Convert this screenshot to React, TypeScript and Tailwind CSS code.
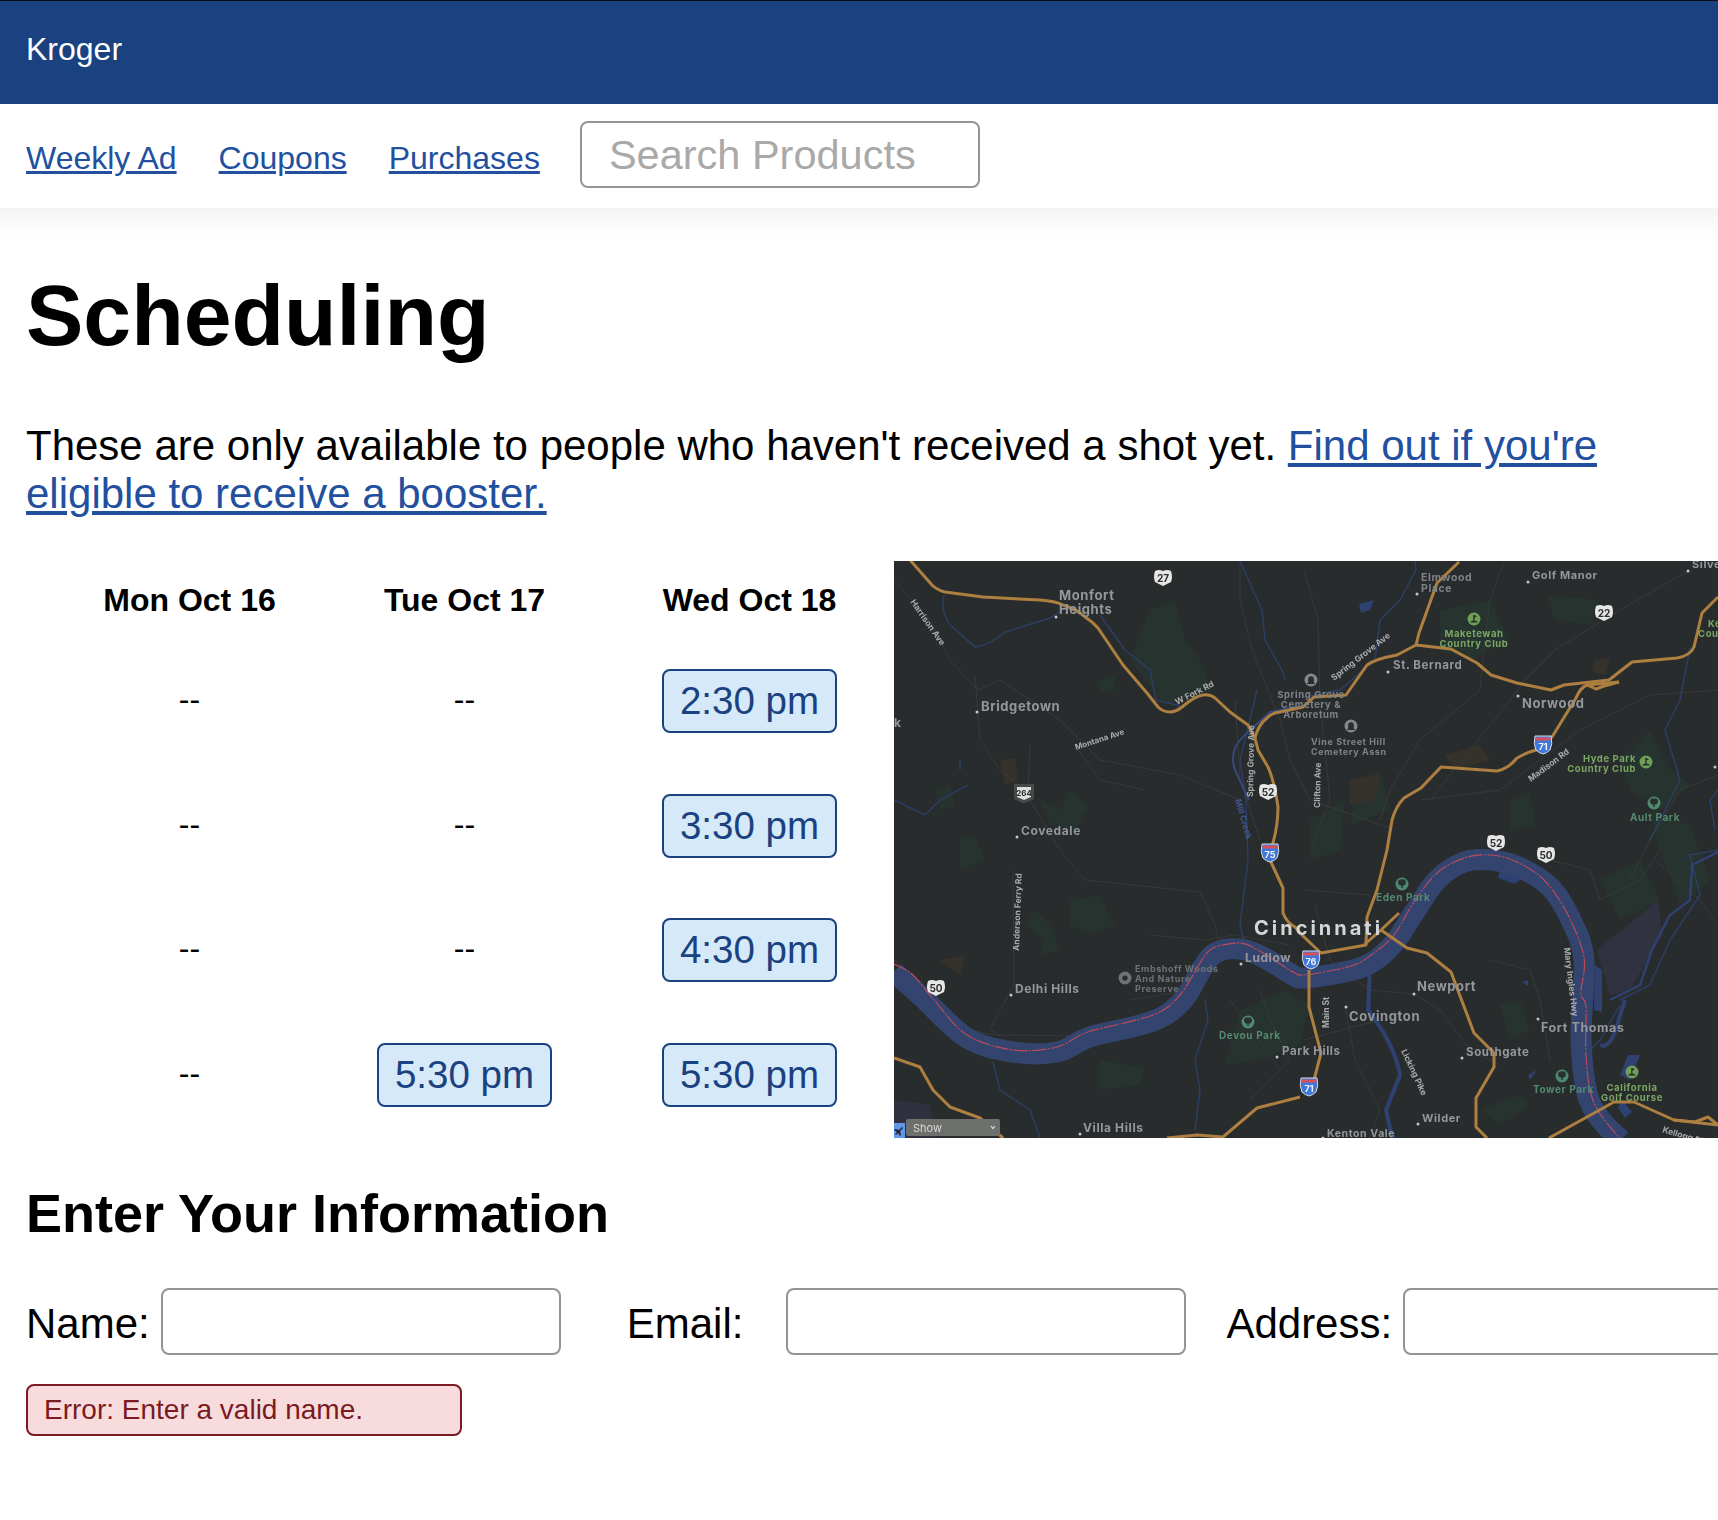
const FONT = "font-['Liberation_Sans',Arial,sans-serif]";

const slots: (string | null)[][] = [
  [null, null, null, null],
  [null, null, null, "5:30 pm"],
  ["2:30 pm", "3:30 pm", "4:30 pm", "5:30 pm"],
];
const days = [
  { name: "Mon Oct 16", ml: "ml-[76px]" },
  { name: "Tue Oct 17", ml: "ml-[100px]" },
  { name: "Wed Oct 18", ml: "ml-[110px]" },
];

// turn a list of points into a smooth path, used for the river
function smooth(pts: number[][]) {
  let d = `M${pts[0][0]} ${pts[0][1]}`;
  for (let i = 0; i < pts.length - 1; i++) {
    const p0 = pts[i - 1] ?? pts[i];
    const p1 = pts[i];
    const p2 = pts[i + 1];
    const p3 = pts[i + 2] ?? p2;
    const c1x = p1[0] + (p2[0] - p0[0]) / 6;
    const c1y = p1[1] + (p2[1] - p0[1]) / 6;
    const c2x = p2[0] - (p3[0] - p1[0]) / 6;
    const c2y = p2[1] - (p3[1] - p1[1]) / 6;
    d += `C${c1x} ${c1y} ${c2x} ${c2y} ${p2[0]} ${p2[1]}`;
  }
  return d;
}

const riverPts = [
  [894, 972], [923, 998], [967, 1038], [1013, 1052], [1057, 1052], [1090, 1037], [1153, 1021], [1183, 1000], [1203, 967], [1217, 952],
  [1240, 949], [1263, 957], [1293, 975], [1304, 978], [1344, 972], [1371, 963], [1394, 943], [1414, 913], [1437, 880], [1464, 862],
  [1491, 860], [1521, 868], [1551, 888], [1571, 920], [1584, 960], [1581, 1037], [1587, 1093], [1601, 1120], [1621, 1140],
];
const borderPts = [
  [894, 964], [913, 975], [934, 1000], [967, 1035], [1013, 1050], [1057, 1047], [1088, 1032], [1153, 1015], [1180, 995], [1200, 963], [1213, 948],
  [1240, 943], [1258, 950], [1293, 972], [1304, 975], [1324, 972], [1354, 965], [1374, 953], [1394, 935], [1414, 902], [1437, 873], [1464, 858],
  [1491, 855], [1517, 862], [1544, 880], [1567, 913], [1584, 957], [1581, 993], [1586, 1007], [1586, 1057], [1594, 1103], [1621, 1140],
];

// map data below is in page coordinates (the svg viewBox starts at the map corner)
const highways = [
  "M910 560L932 585Q937 590 945 592L983 597L1040 600Q1055 601 1063 605Q1078 610 1085 617Q1093 622 1098 628L1123 665L1147 693L1158 707Q1163 712 1170 712Q1176 712 1182 707Q1195 696 1203 695Q1210 694 1215 698L1230 712L1248 725L1255 738L1258 750L1268 767Q1274 780 1278 807Q1278 825 1273 843L1270 860L1283 888L1283 913Q1287 923 1295 927L1304 937L1321 953L1366 945L1367 917L1377 890L1387 850L1392 820Q1396 806 1404 798L1421 788L1441 767L1497 771Q1508 769 1517 758Q1528 752 1536 750L1552 737L1576 698Q1580 688 1587 685L1619 682",
  "M1255 738Q1258 725 1267 718Q1272 713 1280 712L1303 707L1314 697L1346 695L1367 665Q1375 659 1397 655L1416 645L1451 649L1477 663L1491 675L1517 683L1551 690L1564 685L1609 680L1632 662L1677 658Q1690 656 1694 647L1702 613L1718 597",
  "M1416 645L1419 633L1437 583L1459 562",
  "M1381 930L1407 948L1427 953L1451 972L1474 1033L1494 1053L1494 1067L1476 1098L1476 1127L1487 1138",
  "M1399 913L1381 930L1364 945",
  "M1309 970L1309 1007L1321 1053L1314 1080",
  "M1300 1097L1257 1108L1223 1137L1197 1135L1167 1138",
  "M1549 1138L1614 1102L1634 1102L1674 1120L1718 1125",
  "M1674 1120L1695 1122L1708 1117L1718 1125",
  "M894 1058L920 1067L933 1090L950 1107L980 1118L1003 1138",
  "M1587 685L1596 689L1604 686L1619 682",
];
const minorRoads = [
  "M894 580L930 620L950 660L978 690L1000 680L1060 720L1100 760L1180 775L1240 800",
  "M975 676L980 740L1000 770L1024 790L1060 850L1085 880L1200 892L1215 925L1218 940",
  "M1030 745L1028 790M1077 748L1100 780L1145 790",
  "M1013 870L1014 985L1000 1010L990 1030L1000 1035L1100 1036L1150 1015L1180 1005",
  "M894 960L930 990L970 1030L1000 1036M1130 1000L1190 990",
  "M1240 561L1240 600L1252 650L1280 720L1290 760L1310 800L1395 830",
  "M1304 570L1318 620L1320 700L1330 800L1310 850M1235 700L1240 780L1260 840",
  "M1504 561L1490 600L1485 640L1480 690L1420 740L1390 790L1380 820",
  "M1688 571L1620 610L1555 650L1525 680L1510 700L1430 800",
  "M1718 690L1650 695L1580 730L1500 790L1420 800M1718 775L1680 790L1650 840L1630 880",
  "M1304 890L1370 895M1315 905L1330 960L1370 990L1414 994L1440 1010L1470 1050L1500 1065",
  "M1345 1005L1355 1060L1380 1110L1370 1138M1304 1040L1380 1020",
  "M1550 860L1590 870L1600 900L1640 880L1660 850",
  "M1655 860L1700 900L1718 925M1490 960L1530 970L1540 1000L1550 1060",
  "M1250 1100L1290 1060L1270 1020L1260 990M1230 1000L1280 1070",
  "M1150 935L1205 940L1235 935L1290 945",
];
const streams = [
  "M944 595Q940 610 950 625L975 647Q990 645 1005 632L1050 618L1070 605",
  "M1100 615L1125 650L1150 670L1156 700L1180 706",
  "M1240 561L1262 610L1265 640L1282 670L1285 680",
  "M1257 690L1240 760L1246 800L1248 860L1240 925L1245 945",
  "M894 800L925 815L940 800L968 785M960 760L960 770",
  "M1304 697L1340 690L1375 660L1380 620L1400 600L1416 570L1415 561",
  "M1205 1000L1208 1020L1195 1060L1200 1090L1195 1130",
  "M993 1062L1000 1090L1030 1110L1040 1138",
  "M1369 965L1370 1010L1395 1055L1400 1080L1385 1110L1395 1138",
  "M1620 1000L1650 985L1670 940L1700 895L1690 855L1718 850",
  "M1580 1060L1600 1040L1620 1005",
  "M1690 648L1680 700L1665 730L1680 780L1650 840",
  "M1718 790L1710 800L1715 830",
];
const parks = [
  "M1150 610L1175 600L1185 640L1200 660L1212 690L1165 705L1130 660Z",
  "M1100 680L1115 675L1115 690L1100 692Z",
  "M960 840L975 835L985 860L960 870ZM935 790L950 785L955 805L940 810Z",
  "M1040 800L1060 810L1070 790L1090 805L1075 830L1050 825Z",
  "M1025 925L1045 940L1040 955L1060 950L1050 925L1035 910Z",
  "M1070 900L1100 895L1115 925L1090 935L1070 925Z",
  "M1240 1010L1285 990L1310 1005L1300 1045L1260 1060L1225 1065Z",
  "M1440 610L1490 600L1510 640L1470 660L1440 650Z",
  "M1545 595L1600 600L1590 625L1555 620Z",
  "M1620 760L1650 730L1670 770L1690 785L1660 810L1630 790Z",
  "M1510 800L1530 790L1535 825L1510 830Z",
  "M1360 780L1380 770L1390 810L1350 825Z",
  "M1480 1110L1520 1095L1530 1105L1500 1125Z",
  "M1500 1005L1520 1000L1530 1030L1510 1040Z",
  "M1290 1000L1310 1010L1300 1035Z",
  "M1600 880L1640 860L1660 900L1620 920Z",
  "M1650 810L1690 825L1710 880L1680 905L1660 850Z",
  "M1100 1060L1145 1068L1140 1085L1100 1090Z",
  "M1310 820L1345 800L1340 850L1310 860Z",
];
const brownPatches = "M1000 760L1015 758L1018 780L1005 785ZM1445 755L1480 745L1490 760L1455 770ZM1350 780L1380 775L1375 800L1350 805ZM1595 660L1610 658L1605 675L1592 672ZM940 960L965 955L960 975Z";

type Label = { t: string; x: number; y: number; s?: number; c?: string; r?: number; a?: "middle" | "end"; w?: number };
const GREY = "#94979b";
const SOFT = "#7f8388";
const GREEN = "#7aa763";
const TEAL = "#558a70";
const ROAD = "#a9abad";
const labels: Label[] = [
  { t: "Monfort", x: 1059, y: 600 },
  { t: "Heights", x: 1059, y: 614 },
  { t: "Bridgetown", x: 981, y: 710.5, s: 13 },
  { t: "Covedale", x: 1021, y: 835, s: 12 },
  { t: "Delhi Hills", x: 1015, y: 993, s: 12 },
  { t: "Villa Hills", x: 1083, y: 1132, s: 12 },
  { t: "Ludlow", x: 1245, y: 962, s: 12 },
  { t: "Park Hills", x: 1282, y: 1055, s: 11.5 },
  { t: "Newport", x: 1417, y: 991 },
  { t: "Covington", x: 1349, y: 1021 },
  { t: "Southgate", x: 1466, y: 1056, s: 11.5 },
  { t: "Fort Thomas", x: 1541, y: 1032, s: 12.5 },
  { t: "Wilder", x: 1422, y: 1122, s: 11 },
  { t: "Kenton Vale", x: 1327, y: 1137, s: 10.5 },
  { t: "Elmwood", x: 1421, y: 581, s: 10.5, c: SOFT },
  { t: "Place", x: 1421, y: 592, s: 10.5, c: SOFT },
  { t: "Golf Manor", x: 1532, y: 579, s: 11 },
  { t: "Silver", x: 1692, y: 568, s: 11 },
  { t: "St. Bernard", x: 1393, y: 669, s: 11.5 },
  { t: "Norwood", x: 1522, y: 708, s: 13 },
  { t: "k", x: 894, y: 727, s: 12 },
  { t: "Cincinnati", x: 1254, y: 935, s: 20, c: "#d3d5d7", w: 3 },
  { t: "Embshoff Woods", x: 1135, y: 972, s: 9, c: "#6f7275" },
  { t: "And Nature", x: 1135, y: 982, s: 9, c: "#6f7275" },
  { t: "Preserve", x: 1135, y: 992, s: 9, c: "#6f7275" },
  { t: "Vine Street Hill", x: 1311, y: 745, s: 9, c: SOFT },
  { t: "Cemetery Assn", x: 1311, y: 755, s: 9, c: SOFT },
  { t: "Spring Grove", x: 1311, y: 698, s: 9.5, c: SOFT, a: "middle" },
  { t: "Cemetery &", x: 1311, y: 708, s: 9.5, c: SOFT, a: "middle" },
  { t: "Arboretum", x: 1311, y: 718, s: 9.5, c: SOFT, a: "middle" },
  { t: "Maketewah", x: 1474, y: 637, s: 9.5, c: GREEN, a: "middle" },
  { t: "Country Club", x: 1474, y: 647, s: 9.5, c: GREEN, a: "middle" },
  { t: "Hyde Park", x: 1636, y: 762, s: 9.5, c: GREEN, a: "end" },
  { t: "Country Club", x: 1636, y: 772, s: 9.5, c: GREEN, a: "end" },
  { t: "California", x: 1632, y: 1091, s: 9.5, c: GREEN, a: "middle" },
  { t: "Golf Course", x: 1632, y: 1101, s: 9.5, c: GREEN, a: "middle" },
  { t: "Ke", x: 1708, y: 627, s: 9.5, c: GREEN },
  { t: "Cou", x: 1698, y: 637, s: 9.5, c: GREEN },
  { t: "Ault Park", x: 1655, y: 821, s: 10, c: TEAL, a: "middle" },
  { t: "Devou Park", x: 1219, y: 1039, s: 10, c: TEAL },
  { t: "Eden Park", x: 1376, y: 901, s: 10, c: TEAL },
  { t: "Tower Park", x: 1533, y: 1093, s: 10, c: TEAL },
  { t: "Harrison Ave", x: 910, y: 602, s: 8.5, c: ROAD, r: 55, w: 0 },
  { t: "W Fork Rd", x: 1177, y: 705, s: 8.5, c: ROAD, r: -27, w: 0 },
  { t: "Montana Ave", x: 1076, y: 750, s: 8, c: ROAD, r: -18, w: 0 },
  { t: "Spring Grove Ave", x: 1253, y: 797, s: 8.5, c: ROAD, r: -89, w: 0 },
  { t: "Spring Grove Ave", x: 1334, y: 681, s: 8.5, c: ROAD, r: -38, w: 0 },
  { t: "Mill Creek", x: 1235, y: 800, s: 8.5, c: "#41588f", r: 74, w: 0 },
  { t: "Clifton Ave", x: 1320, y: 808, s: 8.5, c: ROAD, r: -89, w: 0 },
  { t: "Madison Rd", x: 1531, y: 782, s: 8.5, c: ROAD, r: -37, w: 0 },
  { t: "Anderson Ferry Rd", x: 1019, y: 951, s: 8.5, c: ROAD, r: -88, w: 0 },
  { t: "Main St", x: 1329, y: 1028, s: 8.5, c: ROAD, r: -90, w: 0 },
  { t: "Licking Pike", x: 1401, y: 1051, s: 8.5, c: ROAD, r: 65, w: 0 },
  { t: "Mary Ingles Hwy", x: 1564, y: 948, s: 8.5, c: ROAD, r: 83, w: 0 },
  { t: "Kellogg Pike", x: 1662, y: 1132, s: 8.5, c: ROAD, r: 17, w: 0 },
];
const dots = [
  [1056, 617], [977, 712], [1017, 837], [1011, 995], [1080, 1134], [1241, 964], [1277, 1057], [1414, 994], [1346, 1007],
  [1462, 1058], [1538, 1019], [1418, 1124], [1323, 1138], [1417, 594], [1528, 582], [1688, 571], [1388, 672], [1518, 696], [1715, 767],
];
const usShields: [string, number, number][] = [["27", 1163, 578], ["52", 1268, 792], ["22", 1604, 613], ["52", 1496, 843], ["50", 1546, 855], ["50", 936, 988]];
const interstates: [string, number, number][] = [["75", 1270, 853], ["71", 1543, 745], ["76", 1311, 960], ["71", 1309, 1087]];
const pois: { x: number; y: number; c: string; kind: "tree" | "golf" | "grave" | "ring" }[] = [
  { x: 1474, y: 619, c: "#6f9f57", kind: "golf" },
  { x: 1646, y: 762, c: "#6f9f57", kind: "golf" },
  { x: 1632, y: 1072, c: "#6f9f57", kind: "golf" },
  { x: 1654, y: 803, c: "#4f8a70", kind: "tree" },
  { x: 1248, y: 1022, c: "#4f8a70", kind: "tree" },
  { x: 1402, y: 884, c: "#4f8a70", kind: "tree" },
  { x: 1562, y: 1076, c: "#4f8a70", kind: "tree" },
  { x: 1311, y: 680, c: "#83868a", kind: "grave" },
  { x: 1351, y: 726, c: "#83868a", kind: "grave" },
  { x: 1125, y: 978, c: "#6f7275", kind: "ring" },
];

function Poi({ x, y, c, kind }: (typeof pois)[number]) {
  return (
    <g transform={`translate(${x} ${y})`}>
      <circle r="6.5" fill={c} />
      {kind === "tree" && <path d="M0 -4.5A3 3 0 0 1 3.5 0A2.5 2.5 0 0 1 .7 1.5V4H-.7V1.5A2.5 2.5 0 0 1 -3.5 0A3 3 0 0 1 0 -4.5Z" fill="#29302e" />}
      {kind === "golf" && <path d="M-.8 -4H.5L3 -2.6L.5 -1.4V1.6L3.5 2.4V3.6H-3.5V2.4L-.8 1.6Z" fill="#29302e" />}
      {kind === "grave" && <path d="M-2.8 3V-1A2.8 2.8 0 0 1 2.8 -1V3Z M-4 3H4V4H-4Z" fill="#2a2c2e" />}
      {kind === "ring" && <circle r="2.6" fill="#2a2c2e" />}
    </g>
  );
}

function UsShield({ n, x, y }: { n: string; x: number; y: number }) {
  return (
    <g transform={`translate(${x} ${y})`}>
      <path d="M-8 -7Q-4 -9 0 -7Q4 -9 8 -7Q10 -1 8 4Q4 6 0 8Q-4 6 -8 4Q-10 -1 -8 -7Z" fill="#e6e6e4" />
      <text y="4" textAnchor="middle" className="font-['Inter',sans-serif] text-[10px] font-bold" fill="#2a2c2e">{n}</text>
    </g>
  );
}

function Interstate({ n, x, y }: { n: string; x: number; y: number }) {
  return (
    <g transform={`translate(${x} ${y})`}>
      <path d="M-8 -9H8Q10 -1 7 5Q4 8 0 9Q-4 8 -7 5Q-10 -1 -8 -9Z" fill="#3f78d8" stroke="#d7dbe2" strokeWidth="1" />
      <rect x="-7.5" y="-7.5" width="15" height="3" fill="#d8505a" />
      <text y="5" textAnchor="middle" className="font-['Inter',sans-serif] text-[9px] font-bold" fill="#f2f4f8">{n}</text>
    </g>
  );
}

function MapPicture() {
  return (
    <svg viewBox="894 561 824 577" className="h-[577px] w-[824px] shrink-0 blur-[0.4px]">
      <rect x="894" y="561" width="824" height="577" fill="#292c2d" />
      {parks.map((d) => (
        <path key={d} d={d} fill="#26332f" />
      ))}
      <path d={brownPatches} fill="#35322c" />
      <path d="M1597 950L1640 915L1658 900L1662 935L1630 990L1610 995Z" fill="#30323f" />
      <path d="M894 1100L930 1105L935 1138L894 1138Z" fill="#30303f" />
      {minorRoads.map((d) => (
        <path key={d} d={d} fill="none" stroke="#37393b" strokeWidth="1" />
      ))}
      {streams.map((d) => (
        <path key={d} d={d} fill="none" stroke="#2d3f66" strokeWidth="1.4" />
      ))}
      <path d="M1249 800L1235 770Q1228 750 1245 735L1270 712L1300 706" fill="none" stroke="#34497c" strokeWidth="2" />
      <path d="M1370 965L1368 1010Q1395 1045 1400 1075L1386 1110L1392 1138" fill="none" stroke="#2f4170" strokeWidth="4" />
      <path d="M1610 1000L1640 985L1652 950L1670 915L1690 900L1692 865L1718 852" fill="none" stroke="#2f4170" strokeWidth="2.5" />
      <path d="M1600 1045Q1612 1050 1620 1015L1625 1000" fill="none" stroke="#2f4170" strokeWidth="4" />
      <path d="M1620 1075L1628 1055L1640 1055L1630 1080ZM1622 1100L1632 1112L1625 1118L1618 1108ZM1595 965L1602 970L1602 1012L1594 1010ZM1520 880L1515 870L1500 868L1498 878L1515 884ZM1359 604L1374 600L1370 610L1361 613ZM1528 1075L1537 1070L1530 1080ZM1522 982L1528 980L1528 986Z" fill="#2f4170" />
      <path d={smooth(riverPts)} fill="none" stroke="#33456f" strokeWidth="21" strokeLinejoin="round" />
      <path d={smooth(borderPts)} fill="none" stroke="#bd4a5a" strokeWidth="1.2" strokeDasharray="14 1.5 2 1.5" />
      {highways.map((d) => (
        <path key={d} d={d} fill="none" stroke="#ad7f41" strokeWidth="3" strokeLinejoin="round" />
      ))}
      {labels.map((l, i) => (
        <text
          key={i}
          x={l.x}
          y={l.y}
          textAnchor={l.a}
          fill={l.c ?? GREY}
          fontSize={l.s ?? 13}
          letterSpacing={l.w ?? 0.6}
          transform={l.r ? `rotate(${l.r} ${l.x} ${l.y})` : undefined}
          className="font-['Inter',sans-serif] font-bold"
        >
          {l.t}
        </text>
      ))}
      {dots.map(([x, y]) => (
        <circle key={`${x}-${y}`} cx={x} cy={y} r="1.5" fill="#c4c6c8" />
      ))}
      {pois.map((p) => (
        <Poi key={`${p.x}-${p.y}`} {...p} />
      ))}
      <g transform="translate(1024 793)">
        <path d="M-10 -9H10V6Q5 9 0 10Q-5 9 -10 6Z" fill="#47494b" />
        <path d="M-7 -6H7V4L0 7L-7 4Z" fill="#dedede" />
        <text y="3" textAnchor="middle" className="font-['Inter',sans-serif] text-[8px] font-bold" fill="#2a2c2e">264</text>
      </g>
      {usShields.map(([n, x, y]) => (
        <UsShield key={`${n}-${x}`} n={n} x={x} y={y} />
      ))}
      {interstates.map(([n, x, y]) => (
        <Interstate key={`${n}-${x}`} n={n} x={x} y={y} />
      ))}
      <rect x="894" y="1123" width="11" height="15" fill="#5f96e8" />
      <path d="M902 1127L899 1130L895 1129L894 1130L897 1132L895 1134L896 1135L898 1133L900 1136L901 1135L900 1131L903 1128Z" fill="#22262c" />
      <rect x="906" y="1119" width="94" height="17" rx="2" fill="#6d6f6c" />
      <text x="913" y="1132" fill="#d6d7d6" className="font-['Inter',sans-serif] text-[11px]">Show</text>
      <path d="M991 1126L993 1128.5L995 1126" fill="none" stroke="#e4e4e4" strokeWidth="1.2" />
    </svg>
  );
}

export default function App() {
  return (
    <div className={`${FONT} min-h-[1520px] w-full overflow-hidden bg-white text-black`}>
      <header className="flex h-[104px] items-center border-t border-t-[#0b0f1a] bg-[#1a4180] px-[26px] pb-[8px] text-[32px] text-white">
        Kroger
      </header>
      <nav className="flex h-[104px] items-center gap-[42px] px-[26px] text-[32px]">
        <a href="#" className="mt-[4px] text-[#22509f] underline">Weekly Ad</a>
        <a href="#" className="mt-[4px] text-[#22509f] underline">Coupons</a>
        <a href="#" className="mt-[4px] text-[#22509f] underline">Purchases</a>
        <input
          placeholder="Search Products"
          className="-mt-[4px] -ml-[2px] h-[67px] w-[400px] rounded-[8px] border-2 border-[#929497] px-[27px] pt-[2px] text-[41.5px] outline-none placeholder:text-[#a9a9a9]"
        />
      </nav>
      <div className="h-[28px] bg-gradient-to-b from-[#f4f4f4] to-white" />

      <main className="px-[26px]">
        <h1 className="mt-[31px] text-[86px] leading-[96px] font-bold">Scheduling</h1>
        <p className="mt-[59px] w-[1640px] text-[42px] leading-[48px]">
          These are only available to people who haven't received a shot yet.{" "}
          <a href="#" className="text-[#22509f] underline">
            Find out if you're
            <br />
            eligible to receive a booster.
          </a>
        </p>

        <div className="mt-[43px] flex">
          <div className="flex w-[868px] shrink-0">
            {days.map((day, col) => (
              <div key={day.name} className={`${day.ml} flex w-[175px] shrink-0 flex-col items-center`}>
                <div className="flex h-[78px] items-center whitespace-nowrap text-[32px] font-bold">{day.name}</div>
                {slots[col].map((slot, row) => (
                  <div key={row} className="flex h-[124.5px] items-center justify-center text-[32px]">
                    {slot ? (
                      <button className="h-[64px] w-[175px] rounded-[8px] border-2 border-[#1a4180] bg-[#d6e9f8] text-[38.5px] text-[#1a4180]">
                        {slot}
                      </button>
                    ) : (
                      <span className="-mt-[4px]">--</span>
                    )}
                  </div>
                ))}
              </div>
            ))}
          </div>
          <MapPicture />
        </div>

        <h2 className="mt-[42px] text-[54px] leading-[66px] font-bold">Enter Your Information</h2>

        <form className="mt-[42px] flex items-center text-[42px]">
          <label htmlFor="name" className="mt-[4px] shrink-0">Name:</label>
          <input id="name" className="ml-[11px] h-[67px] w-[400px] shrink-0 rounded-[8px] border-2 border-[#929497]" />
          <label htmlFor="email" className="mt-[4px] ml-[66px] shrink-0">Email:</label>
          <input id="email" className="ml-[43px] h-[67px] w-[400px] shrink-0 rounded-[8px] border-2 border-[#929497]" />
          <label htmlFor="address" className="mt-[4px] ml-[40px] shrink-0">Address:</label>
          <input id="address" className="ml-[11px] h-[67px] w-[400px] shrink-0 rounded-[8px] border-2 border-[#929497]" />
        </form>

        <div className="mt-[29px] flex h-[52px] w-[436px] items-center rounded-[8px] border-2 border-[#7b1a22] bg-[#f8dcdd] px-[16px] text-[28px] text-[#7b1a22]">
          Error: Enter a valid name.
        </div>
      </main>
    </div>
  );
}
